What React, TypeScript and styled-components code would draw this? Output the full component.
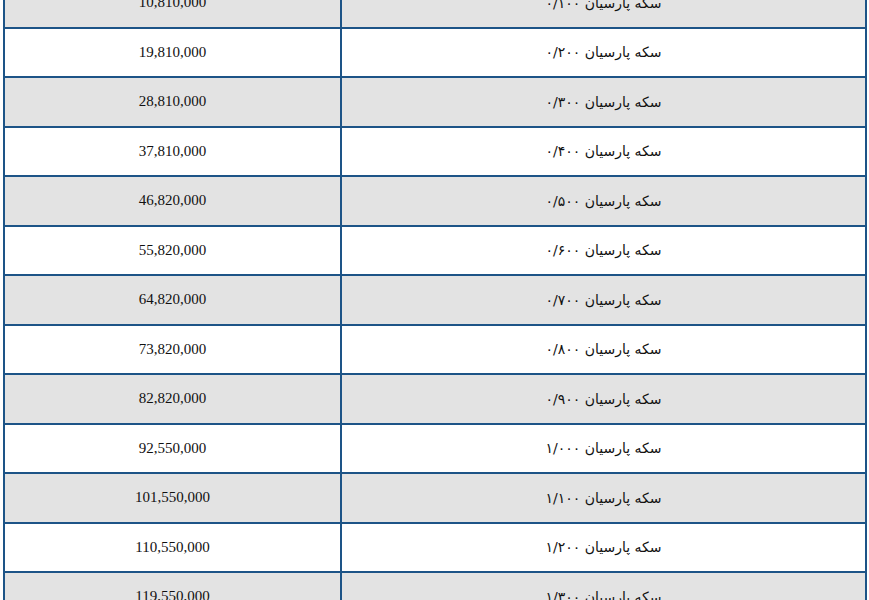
import React from "react";
import styled, { createGlobalStyle } from "styled-components";

const GlobalStyle = createGlobalStyle`
  html, body {
    margin: 0;
    padding: 0;
    background: #ffffff;
    overflow: hidden;
  }
`;

const Page = styled.div`
  padding: 0 2px 0 3px;
  height: 600px;
  overflow: hidden;
`;

const Table = styled.div`
  margin-top: -21px;
  border-left: 2px solid #1d5487;
  border-right: 2px solid #1d5487;
`;

const Row = styled.div<{ $shaded: boolean }>`
  display: grid;
  grid-template-columns: 335px 2px 1fr;
  height: 49.5px;
  box-sizing: border-box;
  border-bottom: 2px solid #1d5487;
  background: ${(p) => (p.$shaded ? "#e3e3e3" : "#ffffff")};
`;

const Divider = styled.div`
  background: #1d5487;
`;

const Price = styled.div`
  display: flex;
  align-items: center;
  justify-content: center;
  font-family: "Liberation Serif", "Times New Roman", serif;
  font-size: 15px;
  color: #111;
`;

const Title = styled.div`
  display: flex;
  align-items: center;
  justify-content: center;
  direction: rtl;
  font-family: "DejaVu Sans", "Noto Sans", sans-serif;
  font-size: 14px;
  color: #111;
`;

const rows: [string, string][] = [
  ["۰/۱۰۰", "10,810,000"],
  ["۰/۲۰۰", "19,810,000"],
  ["۰/۳۰۰", "28,810,000"],
  ["۰/۴۰۰", "37,810,000"],
  ["۰/۵۰۰", "46,820,000"],
  ["۰/۶۰۰", "55,820,000"],
  ["۰/۷۰۰", "64,820,000"],
  ["۰/۸۰۰", "73,820,000"],
  ["۰/۹۰۰", "82,820,000"],
  ["۱/۰۰۰", "92,550,000"],
  ["۱/۱۰۰", "101,550,000"],
  ["۱/۲۰۰", "110,550,000"],
  ["۱/۳۰۰", "119,550,000"],
];

export default function App() {
  return (
    <Page>
      <GlobalStyle />
      <Table>
        {rows.map(([weight, price], i) => (
          <Row key={weight} $shaded={i % 2 === 0}>
            <Price>{price}</Price>
            <Divider />
            <Title>سکه پارسیان {weight}</Title>
          </Row>
        ))}
      </Table>
    </Page>
  );
}
